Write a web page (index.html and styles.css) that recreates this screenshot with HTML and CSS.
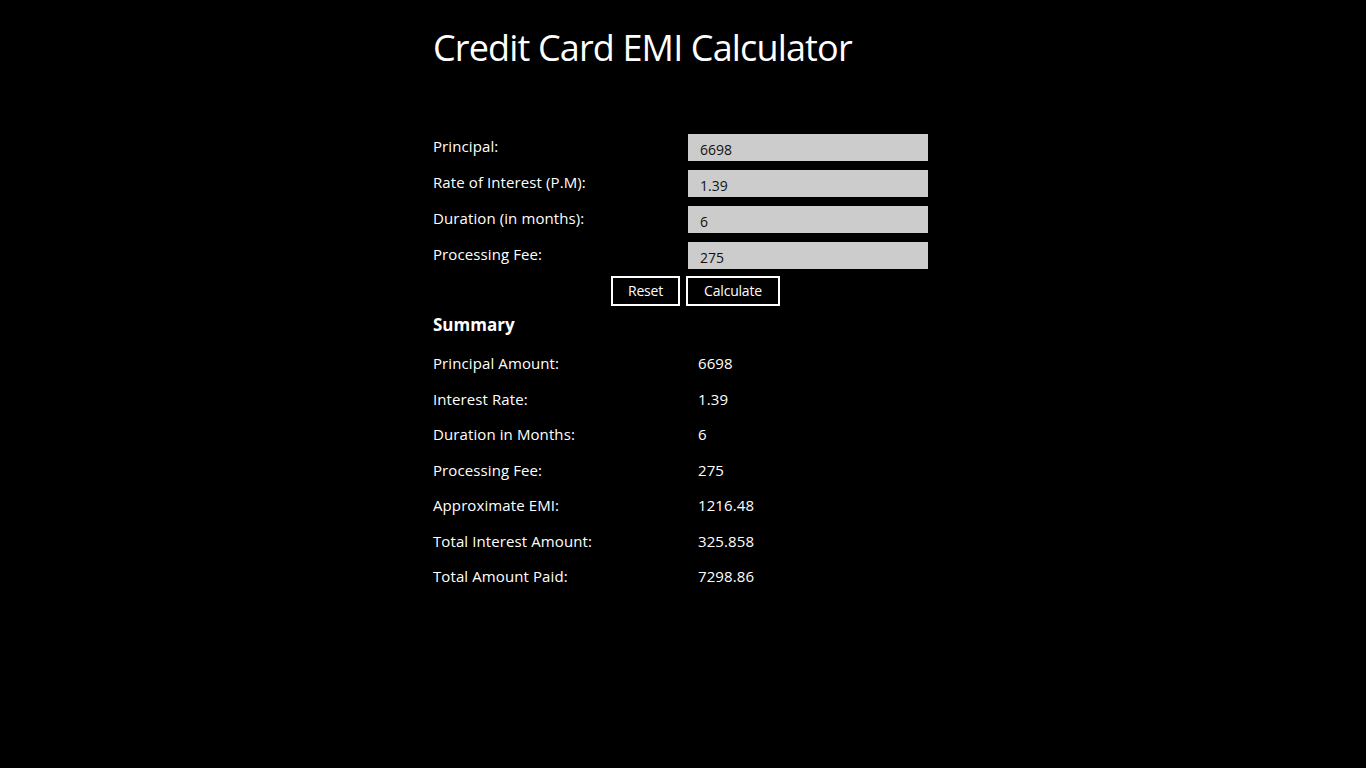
FILE: index.html
```html
<!DOCTYPE html>
<html lang="en">
<head>
<meta charset="utf-8">
<title>Credit Card EMI Calculator</title>
<link rel="stylesheet" href="styles.css">
</head>
<body>
<main class="page">
  <h1 class="title">Credit Card EMI Calculator</h1>
  <section class="form">
    <label class="label">Principal:</label>
    <div class="input">6698</div>
    <label class="label">Rate of Interest (P.M):</label>
    <div class="input">1.39</div>
    <label class="label">Duration (in months):</label>
    <div class="input">6</div>
    <label class="label">Processing Fee:</label>
    <div class="input">275</div>
  </section>
  <div class="buttons">
    <button class="btn btn-reset">Reset</button>
    <button class="btn btn-calc">Calculate</button>
  </div>
  <h2 class="summary-title">Summary</h2>
  <section class="summary">
    <div class="s-label">Principal Amount:</div><div class="s-value">6698</div>
    <div class="s-label">Interest Rate:</div><div class="s-value">1.39</div>
    <div class="s-label">Duration in Months:</div><div class="s-value">6</div>
    <div class="s-label">Processing Fee:</div><div class="s-value">275</div>
    <div class="s-label">Approximate EMI:</div><div class="s-value">1216.48</div>
    <div class="s-label">Total Interest Amount:</div><div class="s-value">325.858</div>
    <div class="s-label">Total Amount Paid:</div><div class="s-value">7298.86</div>
  </section>
</main>
</body>
</html>
```

FILE: styles.css
```css
html, body {
  margin: 0;
  padding: 0;
  background: #000;
  color: #fff;
  font-family: "Open Sans", "Noto Sans", "Liberation Sans", sans-serif;
  height: 100%;
}
.page {
  padding-left: 433px;
  padding-top: 26px;
}
.title {
  margin: 0;
  font-size: 36px;
  font-weight: 400;
  line-height: 44px;
  letter-spacing: -0.85px;
}
.form {
  margin-top: 64px;
  display: grid;
  grid-template-columns: 255px 240px;
  grid-auto-rows: 27px;
  row-gap: 9px;
}
.label {
  font-size: 15px;
  line-height: 24px;
  letter-spacing: 0.1px;
}
.input {
  background: #cccccc;
  color: #111;
  font-size: 14px;
  line-height: 27px;
  padding-left: 12px;
  padding-top: 2px;
  box-sizing: border-box;
}
.buttons {
  display: flex;
  gap: 6px;
  margin-top: 7px;
  margin-left: 178px;
}
.btn {
  background: #000;
  color: #fff;
  border: 2px solid #fff;
  height: 30px;
  box-sizing: border-box;
  font-family: inherit;
  font-size: 14px;
  padding: 0 0 2px 0;
  letter-spacing: -0.2px;
}
.btn-reset { width: 69px; }
.btn-calc { width: 94px; }
.summary-title {
  margin: 7px 0 0 0;
  font-size: 17px;
  font-weight: 700;
  line-height: 24px;
}
.summary {
  margin-top: 14px;
  display: grid;
  grid-template-columns: 265px 200px;
  grid-auto-rows: 35.5px;
  font-size: 15px;
  letter-spacing: 0.1px;
}
.s-label, .s-value {
  line-height: 24px;
}
```
